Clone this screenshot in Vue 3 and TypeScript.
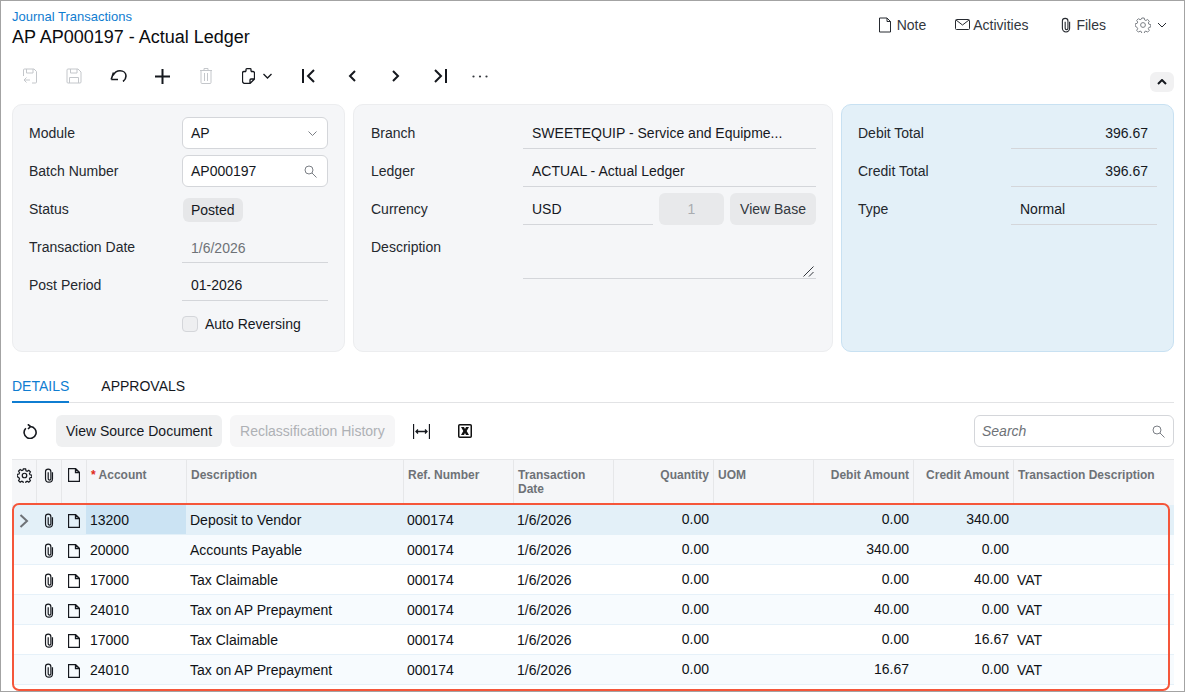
<template>
  <div class="page">
    <header class="head">
      <div>
        <a class="crumb">Journal Transactions</a>
        <h1 class="title">AP AP000197 - Actual Ledger</h1>
      </div>
      <div class="head-actions">
        <span class="head-btn note">
          <svg width="14" height="16" viewBox="0 0 14 16" class="ico"><path d="M1.500 1h7.500l3.500 3.500v10.500h-11z M9 1v3.500h3.500" /></svg>
          Note
        </span>
        <span class="head-btn activities">
          <svg width="15" height="12" viewBox="0 0 15 12" class="ico"><rect x="0.5" y="0.5" width="14" height="10" rx="1" /><path d="M1 1l6.500 5 6.500-5" /></svg>
          Activities
        </span>
        <span class="head-btn files">
          <svg width="10" height="16" viewBox="0 0 9 14" class="ico"><path d="M7.750 4v6a3.250 3.250 0 0 1-6.500 0V3.500a2.500 2.500 0 0 1 5 0V10a1.250 1.250 0 0 1-2.500 0V4" /></svg>
          Files
        </span>
        <span class="head-btn gear">
          <svg width="16" height="16" viewBox="0 0 16 16" class="ico gray"><circle cx="8" cy="8" r="2.400" /><path d="M6.800 1h2.400l.4 1.900 1.300.6 1.700-1 1.700 1.700-1 1.700.6 1.300 1.900.4v2.400l-1.900.4-.6 1.300 1 1.700-1.700 1.700-1.700-1-1.300.6-.4 1.900H6.800l-.4-1.900-1.300-.6-1.700 1-1.700-1.700 1-1.700-.6-1.300L.2 9.200V6.800l1.900-.4.6-1.300-1-1.700 1.700-1.700 1.700 1 1.300-.6z" /></svg>
          <svg width="10" height="6" viewBox="0 0 10 6" class="ico"><path d="M1 1l4 4 4-4" /></svg>
        </span>
      </div>
    </header>

    <div class="toolbar">
      <span class="tool off">
        <svg width="16" height="16" viewBox="0 0 16 16" class="ico"><path d="M1.500 8V2a1 1 0 0 1 1-1h9.500l2.500 2.500V14a1 1 0 0 1-1 1H10M4.500 1v4h6.500V1M8 12H2M4.500 9.500L2 12l2.500 2.500" /></svg>
      </span>
      <span class="tool off">
        <svg width="16" height="16" viewBox="0 0 16 16" class="ico"><path d="M2 1h10l3 3v10a1 1 0 0 1-1 1H2a1 1 0 0 1-1-1V2a1 1 0 0 1 1-1zM4.500 1v4h6.500V1M3.500 15V9.500h9V15" /></svg>
      </span>
      <span class="tool">
        <svg width="17" height="12" viewBox="0 0 17 12" class="ico strong mid"><path d="M1.200 9.500H8M1.200 9.500L3.500 2.500M3 5.500C5 1.500 8 .8 10 .8 13.500.8 16 3 16 6 16 8 15 10 13 11.500" /></svg>
      </span>
      <span class="tool">
        <svg width="15" height="15" viewBox="0 0 15 15" class="ico strong thick"><path d="M7.500 0v15M0 7.500h15" /></svg>
      </span>
      <span class="tool off">
        <svg width="12" height="16" viewBox="0 0 12 16" class="ico"><path d="M0 2.500h12M4 2.500V.5h4v2M1 2.500V14.500a1 1 0 0 0 1 1h8a1 1 0 0 0 1-1V2.500M4.500 5v8M7.500 5v8" /></svg>
      </span>
      <span class="tool clip">
        <svg width="13" height="16" viewBox="0 0 13 16" class="ico strong"><path d="M4 3.500H2A1.500 1.500 0 0 0 .5 5V13A2.500 2.500 0 0 0 3 15.500H8L12.500 11V5A1.500 1.500 0 0 0 11 3.500H9M4 3.500V1.500A.8.8 0 0 1 4.800.7H8.200A.8.8 0 0 1 9 1.500V3.500M8 15.500V12a1 1 0 0 1 1-1h3.500" /></svg>
        <svg width="9" height="6" viewBox="0 0 9 6" class="ico strong"><path d="M.5 1l4 4 4-4" /></svg>
      </span>
      <span class="tool">
        <svg width="13" height="14" viewBox="0 0 13 14" class="ico strong thick"><path d="M1 0v14M12 1L6 7l6 6" /></svg>
      </span>
      <span class="tool">
        <svg width="8" height="12" viewBox="0 0 8 12" class="ico strong thick"><path d="M7 1L2 6l5 5" /></svg>
      </span>
      <span class="tool">
        <svg width="8" height="12" viewBox="0 0 8 12" class="ico strong thick"><path d="M1 1l5 5-5 5" /></svg>
      </span>
      <span class="tool">
        <svg width="13" height="14" viewBox="0 0 13 14" class="ico strong thick"><path d="M12 0v14M1 1l6 6-6 6" /></svg>
      </span>
      <span class="tool dots">
        <svg width="16" height="3" viewBox="0 0 16 3"><circle cx="1.500" cy="1.500" r="1.100" /><circle cx="8" cy="1.500" r="1.100" /><circle cx="14.500" cy="1.500" r="1.100" /></svg>
      </span>
      <button class="collapse">
        <svg width="10" height="6" viewBox="0 0 10 6" class="ico strong thick"><path d="M1 5l4-4 4 4" /></svg>
      </button>
    </div>

    <section class="panels">
      <div class="panel left">
        <div class="row"><label>Module</label>
          <div class="box"><span>AP</span>
            <svg width="9" height="5" viewBox="0 0 9 5" class="ico gray"><path d="M.5.500l4 4 4-4" /></svg>
          </div>
        </div>
        <div class="row"><label>Batch Number</label>
          <div class="box"><span>AP000197</span>
            <svg width="13" height="13" viewBox="0 0 13 13" class="ico gray"><circle cx="5" cy="5" r="4" /><path d="M8 8l4.500 4.500" /></svg>
          </div>
        </div>
        <div class="row"><label>Status</label>
          <div><span class="pill">Posted</span></div>
        </div>
        <div class="row"><label>Transaction Date</label><div class="line muted">1/6/2026</div></div>
        <div class="row"><label>Post Period</label><div class="line">01-2026</div></div>
        <div class="row check"><label></label>
          <div class="check-wrap"><span class="checkbox"></span>Auto Reversing</div>
        </div>
      </div>

      <div class="panel middle">
        <div class="row"><label>Branch</label><div class="line">SWEETEQUIP - Service and Equipme...</div></div>
        <div class="row"><label>Ledger</label><div class="line">ACTUAL - Actual Ledger</div></div>
        <div class="row"><label>Currency</label>
          <div class="currency">
            <div class="line">USD</div>
            <span class="rate">1</span>
            <span class="view-base">View Base</span>
          </div>
        </div>
        <div class="row desc"><label>Description</label>
          <div class="line area">
            <svg width="11" height="11" viewBox="0 0 11 11" class="ico handle"><path d="M.5 10.500l10-10M6 10.500l4.500-4.500" /></svg>
          </div>
        </div>
      </div>

      <div class="panel right">
        <div class="row"><label>Debit Total</label><div class="line num">396.67</div></div>
        <div class="row"><label>Credit Total</label><div class="line num">396.67</div></div>
        <div class="row"><label>Type</label><div class="line">Normal</div></div>
      </div>
    </section>

    <nav class="tabs">
      <span class="tab active">DETAILS</span>
      <span class="tab">APPROVALS</span>
    </nav>

    <div class="grid-tools">
      <span class="gt-ico refresh">
        <svg width="14" height="15" viewBox="0 0 14 15" class="ico strong thick-ish"><path d="M7.500 2.500A6 6 0 1 1 2.800 4.300M4.800 .3L7.600 2.500 5 5" /></svg>
      </span>
      <button class="gbtn">View Source Document</button>
      <button class="gbtn off">Reclassification History</button>
      <span class="gt-ico fit">
        <svg width="17" height="15" viewBox="0 0 17 15" class="ico strong"><path d="M.5 0v15M16.500 0v15M3 7.500h11M5 5.500l-2 2 2 2M12 5.500l2 2-2 2" /></svg>
      </span>
      <span class="gt-ico excel">
        <svg width="14" height="14" viewBox="0 0 14 14"><rect x=".75" y=".75" width="12.500" height="12.500" rx="1" fill="none" stroke="#111" stroke-width="1.500" /><path d="M3 3h3l1 2 1-2h3L8.700 7 11 11H8L7 9l-1 2H3l2.300-4z" fill="#111" /></svg>
      </span>
      <div class="search">
        <span>Search</span>
        <svg width="13" height="13" viewBox="0 0 13 13" class="ico gray"><circle cx="5" cy="5" r="4" /><path d="M8 8l4.500 4.500" /></svg>
      </div>
    </div>

    <div class="grid">
      <div class="grid-row grid-head">
        <div class="cell icon-cell">
          <svg width="15" height="15" viewBox="0 0 16 16" class="ico strong"><circle cx="8" cy="8" r="2.400" /><path d="M6.800 1h2.400l.4 1.900 1.300.6 1.700-1 1.700 1.700-1 1.700.6 1.300 1.900.4v2.400l-1.900.4-.6 1.300 1 1.700-1.700 1.700-1.700-1-1.300.6-.4 1.900H6.800l-.4-1.900-1.300-.6-1.700 1-1.700-1.700 1-1.700-.6-1.300L.2 9.200V6.800l1.900-.4.6-1.300-1-1.700 1.700-1.700 1.700 1 1.300-.6z" /></svg>
        </div>
        <div class="cell icon-cell">
          <svg width="10" height="15" viewBox="0 0 9 14" class="ico clip-ico"><path d="M7.750 4v6a3.250 3.250 0 0 1-6.500 0V3.500a2.500 2.500 0 0 1 5 0V10a1.250 1.250 0 0 1-2.500 0V4" /></svg>
        </div>
        <div class="cell icon-cell">
          <svg width="12" height="14" viewBox="0 0 12 14" class="ico strong"><path d="M.5.500h7l4 4v9h-11zM7.500.5v4h4" /></svg>
        </div>
        <div class="cell"><span class="req">*</span> Account</div>
        <div class="cell">Description</div>
        <div class="cell">Ref. Number</div>
        <div class="cell">Transaction<br />Date</div>
        <div class="cell num">Quantity</div>
        <div class="cell">UOM</div>
        <div class="cell num">Debit Amount</div>
        <div class="cell num">Credit Amount</div>
        <div class="cell">Transaction Description</div>
      </div>

      <div v-for="(line, i) in lines" :key="i" class="grid-row body-row" :class="{ current: i === 0, tint: i % 2 === 1 }">
        <div class="cell icon-cell">
          <svg v-if="i === 0" width="10" height="14" viewBox="0 0 10 14" class="ico chevron"><path d="M1.500 1l6.500 6-6.500 6" /></svg>
        </div>
        <div class="cell icon-cell">
          <svg width="10" height="15" viewBox="0 0 9 14" class="ico clip-ico"><path d="M7.750 4v6a3.250 3.250 0 0 1-6.500 0V3.500a2.500 2.500 0 0 1 5 0V10a1.250 1.250 0 0 1-2.500 0V4" /></svg>
        </div>
        <div class="cell icon-cell">
          <svg width="12" height="14" viewBox="0 0 12 14" class="ico strong"><path d="M.5.500h7l4 4v9h-11zM7.500.5v4h4" /></svg>
        </div>
        <div class="cell account">{{ line.account }}</div>
        <div class="cell">{{ line.description }}</div>
        <div class="cell">000174</div>
        <div class="cell">1/6/2026</div>
        <div class="cell num">0.00</div>
        <div class="cell"></div>
        <div class="cell num">{{ line.debit }}</div>
        <div class="cell num">{{ line.credit }}</div>
        <div class="cell">{{ line.note }}</div>
      </div>

      <div class="highlight"></div>
    </div>
  </div>
</template>

<script setup lang="ts">
interface Line {
  account: string
  description: string
  debit: string
  credit: string
  note: string
}

const lines: Line[] = [
  { account: '13200', description: 'Deposit to Vendor', debit: '0.00', credit: '340.00', note: '' },
  { account: '20000', description: 'Accounts Payable', debit: '340.00', credit: '0.00', note: '' },
  { account: '17000', description: 'Tax Claimable', debit: '0.00', credit: '40.00', note: 'VAT' },
  { account: '24010', description: 'Tax on AP Prepayment', debit: '40.00', credit: '0.00', note: 'VAT' },
  { account: '17000', description: 'Tax Claimable', debit: '0.00', credit: '16.67', note: 'VAT' },
  { account: '24010', description: 'Tax on AP Prepayment', debit: '16.67', credit: '0.00', note: 'VAT' }
]
</script>

<style>
html, body {
  margin: 0;
  background: #fff;
}
</style>

<style scoped>
.page {
  box-sizing: border-box;
  width: 1185px;
  height: 692px;
  border: 1px solid #a3a3a3;
  overflow: hidden;
  font-family: "Liberation Sans", Arial, sans-serif;
  font-size: 14px;
  color: #15181e;
  background: #fff;
}

.ico {
  fill: none;
  stroke: #262a30;
  stroke-width: 1;
  flex: none;
}
.ico.gray { stroke: #7b7f85; }
.ico.strong { stroke: #15181e; stroke-width: 1.300; }
.ico.clip-ico { stroke: #15181e; stroke-width: 1.100; }
.ico.mid { stroke-width: 1.600; }
.ico.thick { stroke-width: 2; }
.ico.thick-ish { stroke-width: 1.600; }
.ico.chevron { stroke: #6e7277; stroke-width: 2; }

.head {
  display: flex;
  justify-content: space-between;
  height: 61px;
  padding: 0 11px;
}
.crumb {
  display: block;
  margin-top: 8px;
  font-size: 13px;
  line-height: 15px;
  color: #0f7dd1;
}
.title {
  margin: 2px 0 0;
  font-size: 18px;
  line-height: 22px;
  font-weight: 400;
  color: #0b0d10;
}
.head-actions {
  display: flex;
  align-items: center;
  height: 48px;
  color: #33373d;
}
.head-btn {
  display: flex;
  align-items: center;
  gap: 5px;
}
.note { margin-right: 29px; }
.activities { margin-right: 33px; gap: 3px; }
.files { margin-right: 29px; gap: 5px; }
.gear { gap: 6px; margin-right: 6px; }

.toolbar {
  display: flex;
  align-items: flex-start;
  height: 42px;
  padding-left: 7px;
}
.tool {
  display: flex;
  align-items: center;
  justify-content: center;
  width: 44px;
  height: 28px;
}
.tool.off .ico { stroke: #c4c7cb; }
.tool.clip { width: 58px; gap: 8px; }
.tool.dots { width: 36px; }
.tool.dots svg { fill: #33373d; }
.collapse {
  display: flex;
  align-items: center;
  justify-content: center;
  width: 24px;
  height: 20px;
  margin: 10px 10px 0 auto;
  padding: 0;
  border: 0;
  border-radius: 6px;
  background: #f1f1f2;
}

.panels {
  display: grid;
  grid-template-columns: 333px 480px 333px;
  gap: 8px;
  padding-left: 11px;
}
.panel {
  box-sizing: border-box;
  height: 248px;
  padding: 9px 16px 0;
  border: 1px solid #ecedef;
  border-radius: 10px;
  background: #f5f6f8;
}
.panel.right {
  border-color: #c8e1f2;
  background: #e3f0f8;
}
.row {
  display: grid;
  grid-template-columns: 153px 1fr;
  align-items: center;
  height: 38px;
}
.row label { color: #24282e; }
.middle .row label { padding-left: 1px; }
.box {
  display: flex;
  align-items: center;
  justify-content: space-between;
  box-sizing: border-box;
  height: 32px;
  padding: 0 10px 0 8px;
  border: 1px solid #d4d6da;
  border-radius: 6px;
  background: #fff;
}
.line {
  box-sizing: border-box;
  height: 32px;
  padding: 0 9px;
  line-height: 32px;
  border-bottom: 1px solid #d4d6da;
  white-space: nowrap;
}
.line.muted { color: #6e7277; line-height: 34px; }
.line.num { text-align: right; }
.pill {
  display: inline-block;
  height: 24px;
  margin: 2px 0 0 1px;
  padding: 0 8px;
  line-height: 24px;
  border-radius: 6px;
  background: #e6e7e9;
}
.row.check { height: 38px; }
.check-wrap {
  display: flex;
  align-items: center;
  gap: 7px;
  margin-top: 2px;
}
.checkbox {
  box-sizing: border-box;
  width: 16px;
  height: 16px;
  border: 1px solid #d4d6da;
  border-radius: 4px;
  background: #eeeff1;
}
.currency {
  display: flex;
  align-items: center;
  gap: 6px;
}
.currency .line { width: 130px; }
.rate {
  width: 65px;
  height: 32px;
  line-height: 32px;
  text-align: center;
  border-radius: 6px;
  background: #e8e9eb;
  color: #a9acb0;
}
.view-base {
  width: 86px;
  height: 32px;
  line-height: 32px;
  text-align: center;
  border-radius: 6px;
  background: #e8e9eb;
  color: #33373d;
}
.row.desc {
  height: 54px;
  align-items: start;
}
.row.desc label { margin-top: 11px; }
.line.area {
  position: relative;
  height: 48px;
  margin-top: 3px;
}
.handle {
  position: absolute;
  right: 2px;
  bottom: 1px;
  stroke: #33373d;
}

.tabs {
  display: flex;
  gap: 32px;
  box-sizing: border-box;
  width: 1162px;
  height: 35px;
  margin: 16px 0 0 11px;
  border-bottom: 1px solid #e2e3e5;
}
.tab {
  height: 35px;
  box-sizing: border-box;
  padding-top: 10px;
  color: #15181e;
}
.tab.active {
  color: #0f7dd1;
  border-bottom: 2px solid #0f7dd1;
}

.grid-tools {
  display: flex;
  align-items: center;
  width: 1162px;
  height: 32px;
  margin: 12px 0 0 11px;
}
.gt-ico {
  display: flex;
  align-items: center;
  justify-content: center;
}
.refresh { width: 36px; margin-right: 8px; }
.fit { width: 17px; margin: 0 0 0 18px; }
.excel { width: 14px; margin-left: 28px; }
.gbtn {
  height: 32px;
  margin-right: 8px;
  padding: 0 10px;
  border: 0;
  border-radius: 6px;
  background: #eff0f1;
  font: inherit;
  color: #15181e;
}
.gbtn.off {
  margin-right: 0;
  background: #f6f6f7;
  color: #aeb1b5;
}
.search {
  display: flex;
  align-items: center;
  justify-content: space-between;
  box-sizing: border-box;
  width: 200px;
  height: 32px;
  margin-left: auto;
  padding: 0 8px 0 7px;
  border: 1px solid #d4d6da;
  border-radius: 6px;
  font-style: italic;
  color: #6e7277;
}

.grid {
  position: relative;
  width: 1162px;
  margin: 12px 0 0 11px;
}
.grid-row {
  display: grid;
  grid-template-columns: 24px 25px 25px 100px 217px 110px 100px 100px 100px 100px 100px 161px;
}
.grid-head {
  box-sizing: border-box;
  grid-template-columns: 25px 25px 25px 100px 217px 110px 100px 100px 100px 100px 100px 160px;
  height: 46px;
  border-top: 1px solid #e6e7e9;
  background: #f5f6f8;
  font-size: 12px;
  font-weight: 700;
  line-height: 14px;
  color: #6e7277;
}
.grid-head .cell {
  padding: 8px 4px 0;
  border-right: 1px solid #e6e7e9;
}
.grid-head .cell:last-child { border-right: 0; }
.grid-head .icon-cell {
  padding: 8px 0 0;
  align-items: flex-start;
}
.req { color: #e0281c; }
.cell {
  box-sizing: border-box;
  display: block;
  min-width: 0;
  padding: 0 4px;
  white-space: nowrap;
}
.icon-cell {
  display: flex;
  justify-content: center;
  align-items: center;
  padding: 0;
}
.cell.num { text-align: right; }
.body-row {
  box-sizing: border-box;
  height: 30px;
  border-bottom: 1px solid #e6f1f9;
  line-height: 31px;
  color: #0f1216;
}
.body-row .num { line-height: 29px; }
.body-row.tint { background: #f7fbfe; }
.body-row.current { background: #e3f0f8; border-bottom: 0; }
.body-row.current .account { background: #cbe3f3; height: 29px; }
.highlight {
  position: absolute;
  left: 0;
  top: 44px;
  width: 1158px;
  height: 188px;
  box-sizing: border-box;
  border: 2px solid #f5563a;
  border-radius: 7px;
  pointer-events: none;
}
</style>
